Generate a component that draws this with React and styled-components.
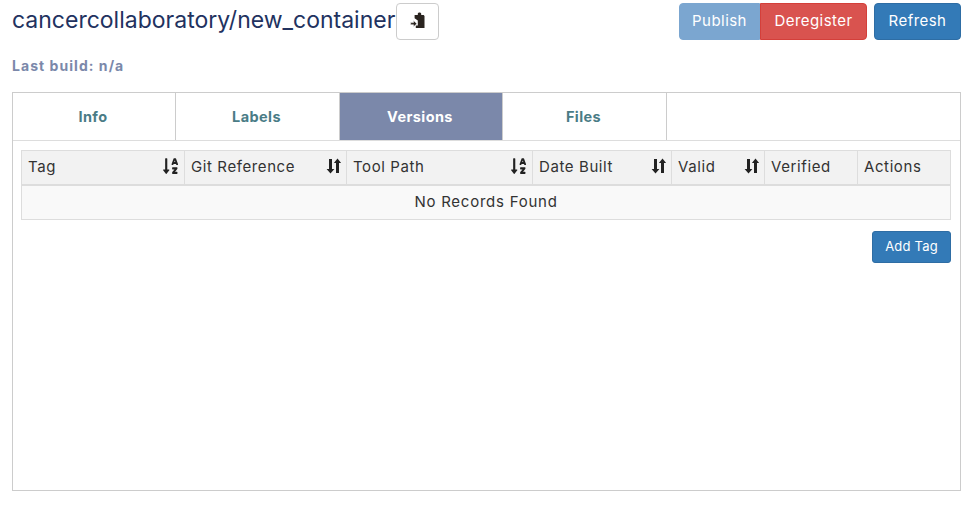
import styled, { createGlobalStyle } from 'styled-components';
import { FaSortAlphaDown } from 'react-icons/fa';

const GlobalStyle = createGlobalStyle`
  html, body {
    margin: 0;
    padding: 0;
    background: #fff;
  }
  body {
    font-family: Inter, 'DejaVu Sans', sans-serif;
  }
`;

const columns = [
  { label: 'Tag', width: 163, sort: 'alpha' },
  { label: 'Git Reference', width: 162, sort: 'plain' },
  { label: 'Tool Path', width: 186, sort: 'alpha' },
  { label: 'Date Built', width: 139, sort: 'plain' },
  { label: 'Valid', width: 93, sort: 'plain' },
  { label: 'Verified', width: 93 },
  { label: 'Actions', width: 93 },
];

const tabs = [
  { label: 'Info', width: 163 },
  { label: 'Labels', width: 164 },
  { label: 'Versions', width: 163, active: true },
  { label: 'Files', width: 164 },
];

function PasteIcon() {
  return (
    <svg width="16" height="17" viewBox="0 0 16 17" fill="#2a2420">
      <path d="M4.6 3h3.2V1.8C7.8 1 8.5.4 9.5.4s1.7.6 1.7 1.4V3h2.5l.8 1v12H5.8v-2.4h2V8.6L4.6 6.2z" />
      <path d="M.6 10.6h2.9V8.6l3.4 3.1-3.4 3.1v-2.1H.6z" stroke="#fff" strokeWidth="0.5" />
    </svg>
  );
}

function SortIcon() {
  return (
    <svg width="16" height="16" viewBox="0 0 16 16" fill="#222">
      <path d="M3 1h3v10h2.4L4.5 15.5.6 11H3z" />
      <path d="M10 15V5H7.9l3.6-4.5L15.1 5H13v10z" />
    </svg>
  );
}

function App() {
  return (
    <Page>
      <GlobalStyle />
      <Header>
        <TitleGroup>
          <Title>cancercollaboratory/new_container</Title>
          <CopyButton><PasteIcon /></CopyButton>
        </TitleGroup>
        <Actions>
          <ButtonGroup>
            <Button $variant="faded">Publish</Button>
            <Button $variant="danger">Deregister</Button>
          </ButtonGroup>
          <Button $variant="primary">Refresh</Button>
        </Actions>
      </Header>
      <LastBuild>Last build: n/a</LastBuild>
      <Panel>
        <TabBar>
          {tabs.map((tab) => (
            <Tab key={tab.label} $width={tab.width} $active={tab.active}>{tab.label}</Tab>
          ))}
        </TabBar>
        <PanelBody>
          <Table>
            <colgroup>
              {columns.map((col) => <col key={col.label} width={col.width} />)}
            </colgroup>
            <thead>
              <tr>
                {columns.map((col) => (
                  <HeadCell key={col.label}>
                    <HeadInner>
                      <HeadLabel>{col.label}</HeadLabel>
                      {col.sort === 'alpha' && <AlphaSort color="#222" preserveAspectRatio="none" />}
                      {col.sort === 'plain' && <PlainSort><SortIcon /></PlainSort>}
                    </HeadInner>
                  </HeadCell>
                ))}
              </tr>
            </thead>
            <tbody>
              <tr>
                <EmptyCell colSpan={columns.length}>No Records Found</EmptyCell>
              </tr>
            </tbody>
          </Table>
          <TableFooter>
            <AddButton>Add Tag</AddButton>
          </TableFooter>
        </PanelBody>
      </Panel>
    </Page>
  );
}

export default App;

const Page = styled.div`
  padding: 3px 19px 18px 12px;
`;

const Header = styled.div`
  display: flex;
  justify-content: space-between;
  align-items: flex-start;
`;

const TitleGroup = styled.div`
  display: flex;
  align-items: flex-start;
`;

const Title = styled.h1`
  margin: 0;
  width: 384px;
  font-size: 23px;
  font-weight: 400;
  line-height: 35px;
  color: #22325f;
  white-space: nowrap;
`;

const CopyButton = styled.button`
  display: flex;
  align-items: center;
  justify-content: center;
  width: 43px;
  height: 37px;
  padding: 0 0 2px;
  background: #fff;
  border: 1px solid #ccc;
  border-radius: 4px;
`;

const Actions = styled.div`
  display: flex;
  gap: 7px;
`;

const ButtonGroup = styled.div`
  display: flex;
`;

const variants = {
  faded: 'background: #7ba6d0; border-color: #7ba6d0; border-radius: 4px 0 0 4px; width: 81px;',
  danger: 'background: #d9534f; border-color: #d43f3a; border-radius: 0 4px 4px 0; width: 107px;',
  primary: 'background: #337ab7; border-color: #2e6da4; border-radius: 4px; width: 87px;',
};

const Button = styled.button`
  height: 37px;
  padding: 0 0 2px;
  border: 1px solid;
  color: #fff;
  font-family: inherit;
  font-size: 15px;
  letter-spacing: 0.45px;
  ${(p) => variants[p.$variant]}
`;

const LastBuild = styled.div`
  margin-top: 17px;
  font-size: 14px;
  line-height: 18px;
  font-weight: 700;
  letter-spacing: 1.05px;
  color: #7b88aa;
`;

const Panel = styled.div`
  box-sizing: border-box;
  height: 399px;
  margin-top: 17px;
  border: 1px solid #ccc;
`;

const TabBar = styled.div`
  display: flex;
  height: 47px;
  border-bottom: 1px solid #ddd;
`;

const Tab = styled.div`
  display: flex;
  align-items: center;
  justify-content: center;
  box-sizing: border-box;
  width: ${(p) => p.$width}px;
  padding-right: 2px;
  border-right: 1px solid #ccc;
  font-size: 14.5px;
  font-weight: 700;
  letter-spacing: 0.4px;
  color: ${(p) => (p.$active ? '#fff' : '#4a7c86')};
  background: ${(p) => (p.$active ? '#7b88aa' : '#fff')};
`;

const PanelBody = styled.div`
  padding: 9px 9px 0 8px;
`;

const Table = styled.table`
  width: 929px;
  table-layout: fixed;
  border-collapse: collapse;
  font-size: 15px;
  color: #333;
`;

const HeadCell = styled.th`
  height: 33px;
  padding: 0 6px;
  background: #f2f2f2;
  border: 1px solid #ddd;
  border-bottom-width: 2px;
  font-weight: 400;
  text-align: left;
`;

const HeadInner = styled.div`
  display: flex;
  align-items: center;
  justify-content: space-between;
  white-space: nowrap;
`;

const HeadLabel = styled.span`
  padding-bottom: 2px;
  letter-spacing: 0.6px;
`;

const AlphaSort = styled(FaSortAlphaDown)`
  width: 15px;
  height: 18px;
  margin-top: -4px;
`;

const PlainSort = styled.span`
  display: flex;
  margin: -4px -2px 0 0;
`;

const EmptyCell = styled.td`
  height: 31px;
  padding: 0 0 2px;
  background: #f9f9f9;
  border: 1px solid #ddd;
  text-align: center;
  letter-spacing: 0.75px;
`;

const TableFooter = styled.div`
  display: flex;
  justify-content: flex-end;
  margin-top: 11px;
`;

const AddButton = styled.button`
  width: 79px;
  height: 32px;
  padding: 0 0 2px;
  background: #337ab7;
  border: 1px solid #2e6da4;
  border-radius: 3px;
  color: #fff;
  font-family: inherit;
  font-size: 13px;
  letter-spacing: 0.2px;
`;
